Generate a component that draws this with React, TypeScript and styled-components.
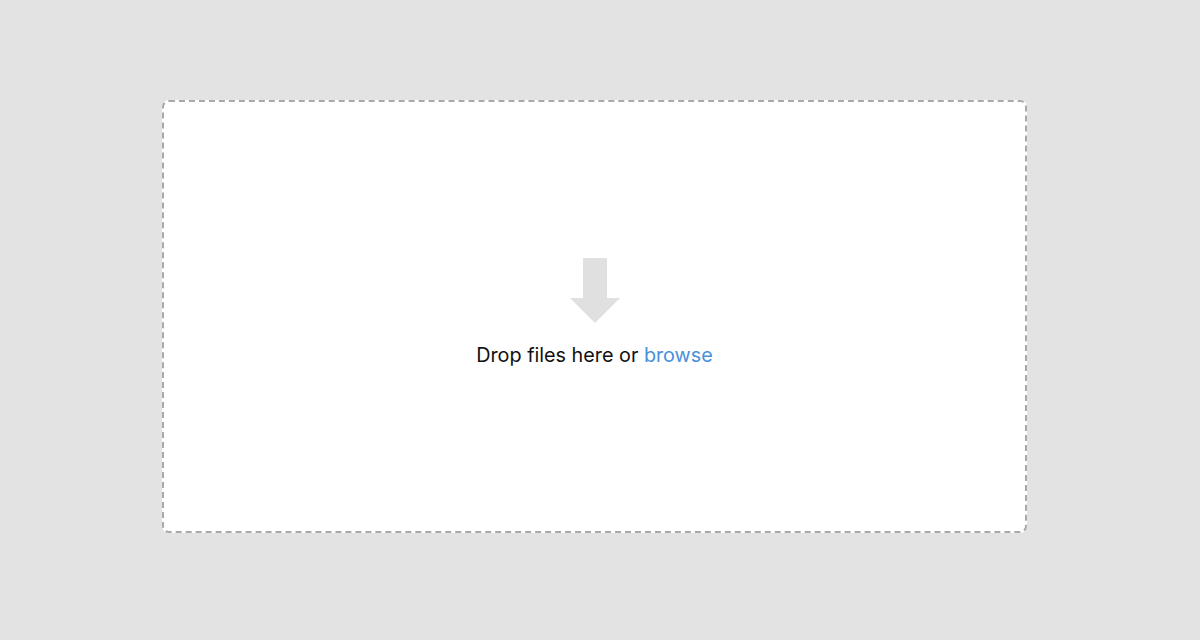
import React from "react";
import styled, { createGlobalStyle } from "styled-components";

const Global = createGlobalStyle`
  html, body { margin: 0; padding: 0; background: #e3e3e3; }
  body { font-family: Inter, "Liberation Sans", sans-serif; }
`;

const Page = styled.div`
  width: 1200px;
  height: 640px;
  box-sizing: border-box;
  padding: 100px 0 0 162px;
`;

const DropZone = styled.div`
  width: 865px;
  height: 433px;
  box-sizing: border-box;
  background: #ffffff;
  border: 2px dashed #a9a9a9;
  border-radius: 7px;
  display: flex;
  flex-direction: column;
  align-items: center;
  padding-top: 156px;
`;

const Arrow = styled.svg`
  display: block;
  width: 50px;
  height: 66px;
`;

const Label = styled.div`
  margin-top: 19px;
  font-size: 19.8px;
  line-height: 24px;
  color: #111;
`;

const Browse = styled.a`
  color: #4a90d9;
  text-decoration: none;
  cursor: pointer;
`;

export default function App() {
  return (
    <>
      <Global />
      <Page>
        <DropZone>
          <Arrow viewBox="0 0 50 66">
            <rect x="13" y="0" width="24" height="41" fill="#e0e0e0" />
            <polygon points="0,40 50,40 25,65" fill="#e0e0e0" />
          </Arrow>
          <Label>
            Drop files here or <Browse>browse</Browse>
          </Label>
        </DropZone>
      </Page>
    </>
  );
}
